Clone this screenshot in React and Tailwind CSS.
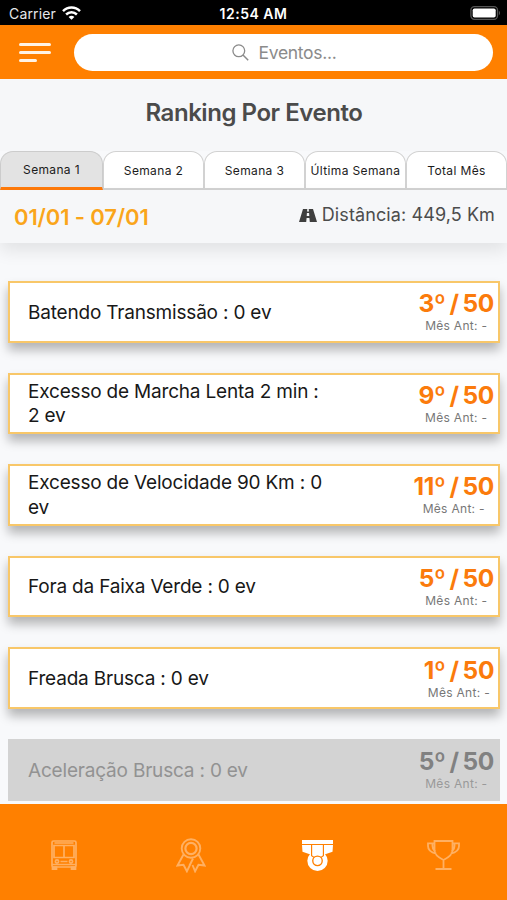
const TABS = ['Semana 1', 'Semana 2', 'Semana 3', 'Última Semana', 'Total Mês'];

const EVENTS = [
  { name: 'Batendo Transmissão : 0 ev', rank: '3º / 50' },
  { name: 'Excesso de Marcha Lenta 2 min : 2 ev', rank: '9º / 50' },
  { name: 'Excesso de Velocidade 90 Km : 0 ev', rank: '11º / 50' },
  { name: 'Fora da Faixa Verde : 0 ev', rank: '5º / 50' },
  { name: 'Freada Brusca : 0 ev', rank: '1º / 50' },
  { name: 'Aceleração Brusca : 0 ev', rank: '5º / 50', disabled: true },
];

function StatusBar() {
  return (
    <div className="grid h-[25px] shrink-0 grid-cols-3 items-center bg-black pt-[3px] text-[14px] leading-none text-white">
      <div className="flex items-center gap-[6px] pl-[9px]">
        <span className="tracking-[0.15px] text-gray-200">Carrier</span>
        <svg className="-mt-[2px] h-[14px] w-[19px]" viewBox="0 0 19 14" fill="none" stroke="white" strokeWidth="2.5">
          <path d="M1 5.2C5.8.4 13.2.4 18 5.2" />
          <path d="M4.1 8.5c3.1-3 7.700-3 10.800 0" />
          <path d="M6.600 10.900c1.700-1.600 4.100-1.600 5.800 0L9.500 13.800z" fill="white" stroke="none" />
        </svg>
      </div>
      <div className="text-center font-semibold tracking-[0.5px]">12:54 AM</div>
      <svg className="-mt-[2px] mr-[6px] h-[14px] w-[31px] justify-self-end" viewBox="0 0 31 14" fill="none">
        <rect x=".9" y=".7" width="26.600" height="12.600" rx="3.500" stroke="#555" strokeWidth="1.300" />
        <rect x="2.700" y="2.400" width="23" height="9.200" rx="1.800" fill="white" />
        <path d="M28.900 4.800c1.500.7 1.500 3.700 0 4.400z" fill="#555" />
      </svg>
    </div>
  );
}

function Header() {
  return (
    <header className="flex h-[54px] shrink-0 items-center bg-[#ff8000] pl-[19px] pr-[14px]">
      <div className="flex w-8 flex-col gap-[5px]">
        <span className="h-[3px] w-8 rounded-full bg-[#fff3e5]" />
        <span className="h-[3px] w-8 rounded-full bg-[#fff3e5]" />
        <span className="h-[3px] w-[18px] rounded-full bg-[#fff3e5]" />
      </div>
      <div className="ml-[23px] flex h-[37px] flex-1 items-center justify-center gap-[10px] rounded-full bg-white pl-px text-[17.500px] tracking-[-0.300px] text-[#8b8b8b]">
        <svg className="size-[17px]" viewBox="0 0 17 17" fill="none" stroke="#8b8b8b" strokeWidth="1.300">
          <circle cx="6.800" cy="6.800" r="5.900" />
          <path d="M11 11l5.200 5.200" strokeWidth="1.500" />
        </svg>
        <span className="pt-[2px]">Eventos...</span>
      </div>
    </header>
  );
}

function Tabs() {
  return (
    <div className="flex h-[39px] shrink-0">
      {TABS.map((tab, i) => (
        <div
          key={tab}
          className={
            'flex items-center justify-center whitespace-nowrap rounded-t-[13px] border text-[12px] tracking-[0.35px] text-[#1c1c1c] ' +
            (i === 0
              ? 'w-[103px] border-[#ccc] border-b-[3px] border-b-[#ff7a0a] bg-[#e3e3e3]'
              : 'w-[101px] border-b-2 border-[#d2d2d2] bg-white pt-[2px]')
          }
        >
          {tab}
        </div>
      ))}
    </div>
  );
}

function Summary() {
  return (
    <div className="flex h-[53px] shrink-0 items-start justify-between bg-[#f6f7f9] pl-[14px] pr-[12px] shadow-[0_8px_16px_rgba(0,0,0,0.09)]">
      <div className="mt-[12px] text-[22px] font-semibold leading-[30px] tracking-[-0.120px] text-[#faa51a]">01/01 - 07/01</div>
      <div className="mt-[10px] flex items-center gap-[5px] text-[18px] leading-[30px] tracking-[0.1px] text-[#4c4c4c]">
        <svg className="h-[13px] w-[18px]" viewBox="0 0 18 13" fill="#3f3f3f">
          <path d="M4 0h4.300L8 2.500h2L9.700 0H14l4 13h-7.200l-.4-4H7.600l-.4 4H0zM7.900 4l-.2 3h2.600l-.2-3z" fillRule="evenodd" />
        </svg>
        <span>Distância: 449,5 Km</span>
      </div>
    </div>
  );
}

function EventCard({ name, rank, disabled }) {
  return (
    <div
      className={
        'flex h-[61.600px] shrink-0 items-center justify-between border-2 pl-[18px] ' +
        (disabled
          ? 'border-[#d3d3d3] bg-[#d3d3d3] text-[#929292]'
          : 'border-[#f8c769] bg-white text-[#181818] shadow-[0_7px_10px_rgba(0,0,0,0.28)]')
      }
    >
      <div className="w-[300px] pt-[2px] text-[19px] leading-[24.500px] tracking-[-0.190px]">{name}</div>
      <div className="flex flex-col items-center pr-[4px] pt-px">
        <div className={'text-[24.500px] font-bold leading-[27px] tracking-[-0.400px] [word-spacing:-1.300px] ' + (disabled ? 'text-[#818181]' : 'text-[#fb7b0c]')}>{rank}</div>
        <div className={'text-[12px] leading-[17px] tracking-[0.3px] ' + (disabled ? 'text-[#999]' : 'text-[#777]')}>Mês Ant: -</div>
      </div>
    </div>
  );
}

function Footer() {
  return (
    <nav className="grid h-[96px] shrink-0 grid-cols-4 items-center justify-items-center bg-[#ff8000] pl-px pt-[6px]">
      <svg className="h-[30px] w-[26px]" viewBox="0 0 26 30" fill="none" stroke="#ffb062" strokeWidth="1.700">
        <rect x="1" y="1" width="24" height="26" rx="1.500" />
        <path d="M3.500 3h19M3 5.500h20v12H3zM13 6v12M1 24.500h24M9.500 21.500h7" />
        <circle cx="6" cy="21.500" r="1.600" />
        <circle cx="20" cy="21.500" r="1.600" />
        <path d="M1.500 27h4v2.200h-4zM20.500 27h4v2.200h-4z" fill="#ffb062" />
      </svg>
      <svg className="h-[35px] w-[30px]" viewBox="0 0 30 35" fill="none" stroke="#ffb062" strokeWidth="1.900">
        <circle cx="15" cy="10.500" r="9.300" />
        <circle cx="15" cy="10.500" r="5.600" strokeWidth="2.200" />
        <path d="M7.500 16.500L1.500 27.500l6-.7 3.400 6.500L17 20.500M22.500 16.500l6 11-6-.7-3.400 6.500-2.600-6.300M13.500 27.500l3.500-7" />
      </svg>
      <svg className="h-[31px] w-[31px]" viewBox="0 0 32 32" fill="white">
        <path d="M0 0h32v4H0zM0 5.200h9.500v10L.5 12zM22.500 5.200H32L31.500 12l-9 3.200z" />
        <circle cx="16" cy="21.500" r="10.500" />
        <path d="M9.900 4.600h12.200v11.600L19.500 18h-7l-2.600-1.800z" stroke="#ff8000" strokeWidth="1.200" />
        <circle cx="16" cy="21.500" r="4.900" stroke="#ff8000" strokeWidth="1.400" />
      </svg>
      <svg className="h-[30px] w-[33px]" viewBox="0 0 33 30" fill="none" stroke="#ffb062" strokeWidth="1.800">
        <path d="M7.500 1h18v9.500c0 3.500-5 7.500-9 9.500-4-2-9-6-9-9.500zM7.500 3.300H1V6c0 4.500 3 6.500 8.200 7.500M25.500 3.300H32V6c0 4.500-3 6.500-8.200 7.500M5.500 3.500c-.4 4 .7 6.500 3 7.500M27.500 3.500c.4 4-.7 6.500-3 7.500M16.500 20v8.500M8.500 29h16" />
      </svg>
    </nav>
  );
}

export default function App() {
  return (
    <div className="flex h-[900px] w-[507px] flex-col overflow-hidden bg-[#f8f9fb] font-['Inter','Liberation_Sans',sans-serif]">
      <StatusBar />
      <Header />
      <h1 className="h-[72px] shrink-0 bg-[#f6f7f9] pl-px pt-[18px] text-center text-[24px] font-semibold leading-[32px] tracking-[-0.450px] text-[#4b4b4b]">
        Ranking Por Evento
      </h1>
      <Tabs />
      <Summary />
      <main className="flex min-h-0 flex-1 flex-col gap-[30px] overflow-hidden pl-[8px] pr-[7px] pt-[38px]">
        {EVENTS.map((event) => (
          <EventCard key={event.name} {...event} />
        ))}
      </main>
      <Footer />
    </div>
  );
}
